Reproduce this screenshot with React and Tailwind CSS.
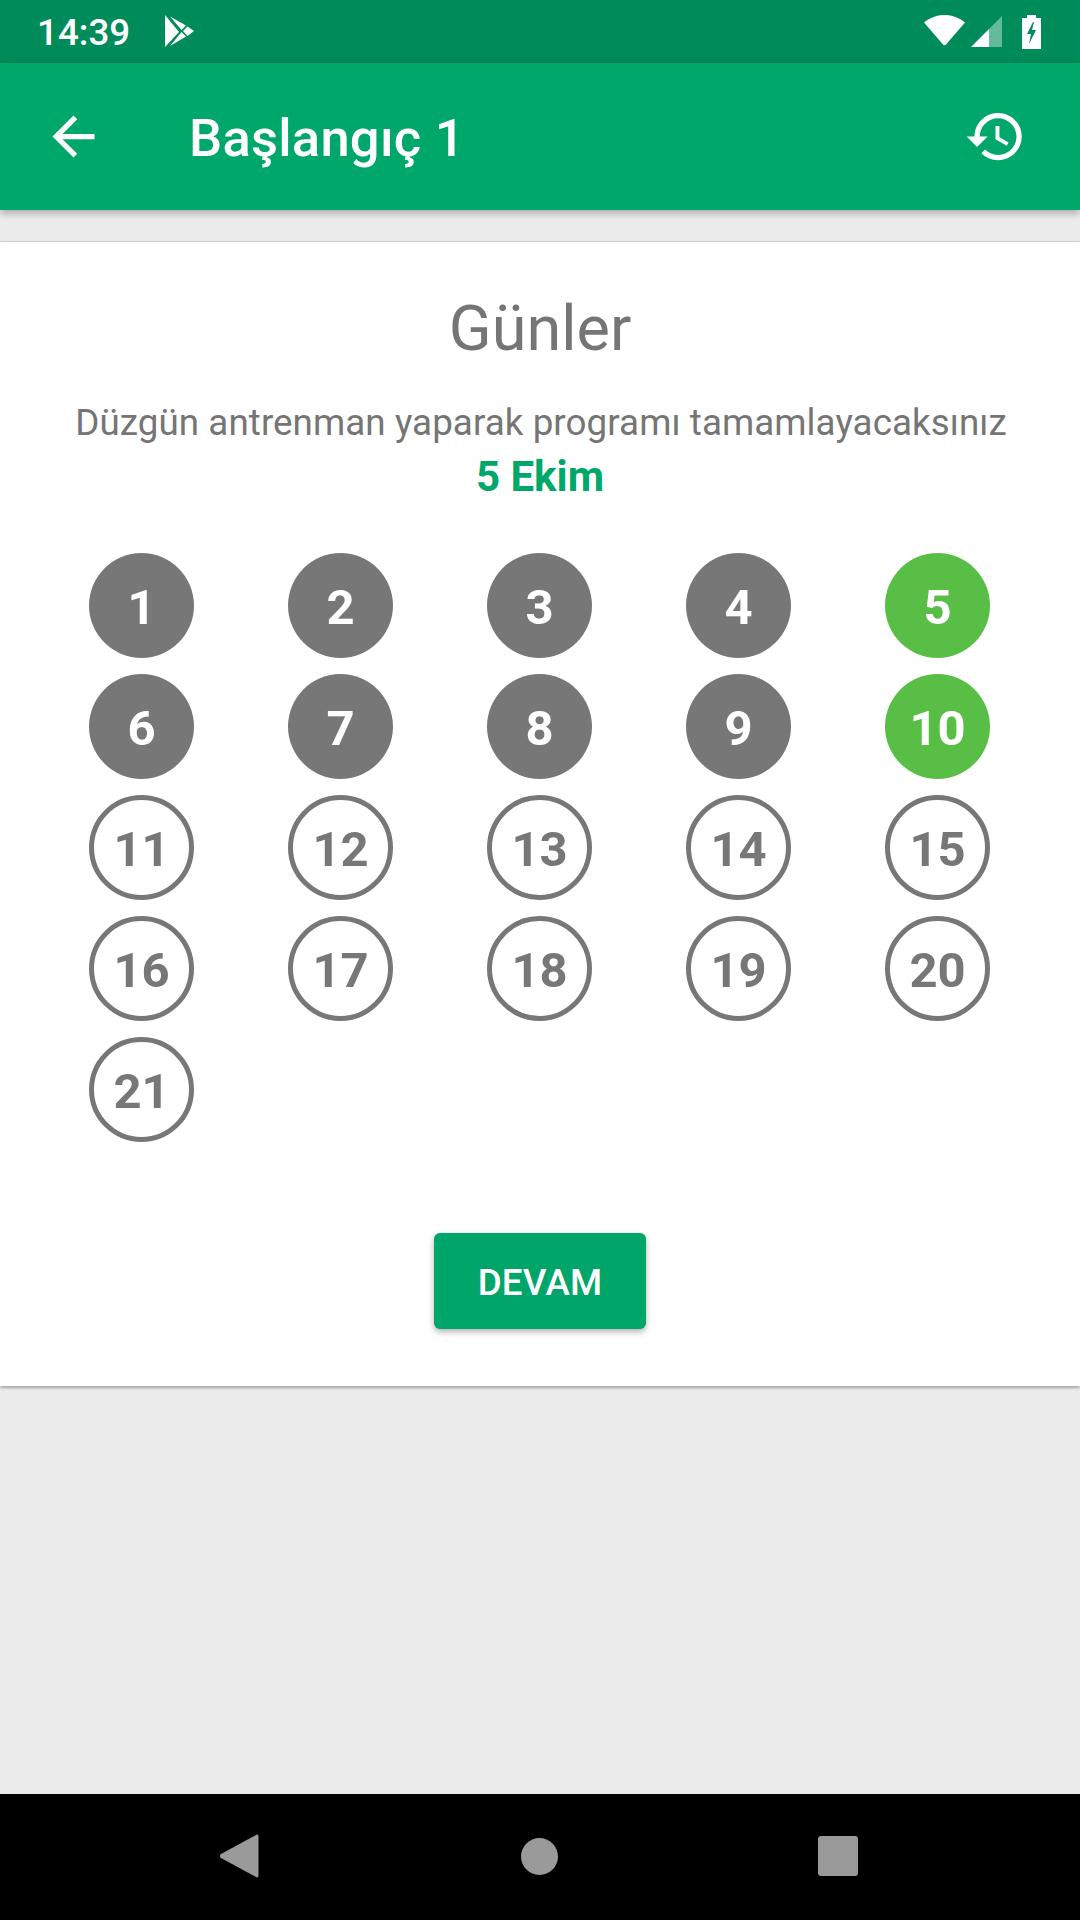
const days = Array.from({ length: 21 }, (_, i) => i + 1);
const grayDays = [1, 2, 3, 4, 6, 7, 8, 9];
const greenDays = [5, 10];

const DayCircle = ({ day }) => {
  let style = "border-[5px] border-[#777777] text-[#777777] bg-white";
  if (grayDays.includes(day)) style = "bg-[#777777] text-white";
  if (greenDays.includes(day)) style = "bg-[#59be45] text-white";
  return (
    <div className={`w-[105px] h-[105px] pt-[3px] rounded-full flex items-center justify-center text-[49px] font-bold leading-none ${style}`}>
      {day}
    </div>
  );
};

const App = () => {
  return (
    <div className="w-[1080px] h-[1920px] flex flex-col bg-[#ececec] font-['Roboto',sans-serif] overflow-hidden">
      {/* Status bar */}
      <div className="h-[63px] shrink-0 bg-[#008c5a] flex items-center justify-between pl-[37px] pr-[39px] text-white">
        <div className="flex items-center gap-[34px]">
          <span className="pt-[4px] text-[36.75px] font-medium leading-none">14:39</span>
          <svg width="30" height="33" viewBox="0 0 30 33" fill="white">
            <path d="M1 0 L1 32 L15 17 Z" />
            <path d="M6 1.5 L22 10.5 L17.5 15 Z" />
            <path d="M23.5 11.5 L30 16 L23.5 21 L19 16 Z" />
            <path d="M6 31 L22 21.5 L17.5 17 Z" />
          </svg>
        </div>
        <div className="flex items-center">
          <svg className="-mt-[2px]" width="41" height="31" viewBox="0 0 41 31" fill="white">
            <path d="M20.5 0 C28 0 35 2.6 41 7.6 L22 29.5 Q20.5 31 19 29.5 L0 7.6 C6 2.6 13 0 20.5 0 Z" />
          </svg>
          <svg className="ml-[6px]" width="31" height="31" viewBox="0 0 31 31">
            <path d="M31 0 V31 H18 V13 Z" fill="white" fillOpacity="0.4" />
            <path d="M18 13 V31 H0 Z" fill="white" />
          </svg>
          <svg className="ml-[20px]" width="19" height="34" viewBox="0 0 19 34" fill="white">
            <path fillRule="evenodd" d="M5 0 H14 V3 H19 V34 H0 V3 H5 Z M11 7 L5 19 H9 L7 29 L14 15 H10 L12 7 Z" />
          </svg>
        </div>
      </div>

      {/* App bar */}
      <div className="relative z-10 h-[147px] shrink-0 bg-[#00a76a] flex items-center pl-[42px] pr-[53px] text-white shadow-[0_3px_8px_rgba(0,0,0,0.3)]">
        <svg width="63" height="63" viewBox="0 0 24 24" fill="white">
          <path d="M20 11H7.83l5.59-5.59L12 4l-8 8 8 8 1.41-1.41L7.83 13H20v-2z" />
        </svg>
        <h1 className="ml-[84px] pt-[4px] text-[52.5px] font-medium leading-none tracking-[0.25px]">Başlangıç 1</h1>
        <svg width="63" height="63" viewBox="0 0 24 24" fill="white" className="ml-auto">
          <path d="M13 3c-4.97 0-9 4.03-9 9H1l3.89 3.89.07.14L9 12H6c0-3.87 3.13-7 7-7s7 3.13 7 7-3.13 7-7 7c-1.93 0-3.68-.79-4.94-2.06l-1.42 1.42C8.27 19.99 10.51 21 13 21c4.97 0 9-4.03 9-9s-4.03-9-9-9zm-1 5v5l4.28 2.54.72-1.21-3.5-2.08V8H12z" />
        </svg>
      </div>

      {/* Card */}
      <div className="mt-[32px] h-[1144px] shrink-0 bg-white shadow-[0_2px_3px_rgba(0,0,0,0.3),0_-1px_1px_rgba(0,0,0,0.1)] pt-[50px] flex flex-col items-center">
        <h2 className="text-[63px] leading-[74px] text-[#757575]">Günler</h2>
        <p className="mt-[30px] pl-[2px] text-[36.75px] leading-[54px] text-[#757575] tracking-[0.07px]">
          Düzgün antrenman yaparak programı tamamlayacaksınız
        </p>
        <p className="text-[42px] leading-[54px] font-bold text-[#00a76a]">5 Ekim</p>

        <div className="mt-[49px] w-full pl-[89px] pr-[90px] grid grid-cols-[repeat(5,105px)] gap-y-[16px] justify-between">
          {days.map((d) => (
            <DayCircle key={d} day={d} />
          ))}
        </div>

        <button className="mt-[91px] w-[212px] h-[96px] pt-[3px] rounded-[6px] bg-[#00a56a] text-white text-[36.75px] font-medium tracking-[0.2px] shadow-[0_3px_6px_rgba(0,0,0,0.3)]">
          DEVAM
        </button>
      </div>

      <div className="flex-1" />

      {/* Nav bar */}
      <div className="h-[126px] shrink-0 bg-black pb-[2px] flex items-center">
        <svg className="ml-[219px]" width="40" height="44" viewBox="0 0 40 44" fill="#9a9a9a">
          <path d="M37 1 C38.5 0 39.5 1 39.5 2.5 V41.5 C39.5 43 38.5 44 37 43 L2 24 C0.5 23 0.5 21 2 20 Z" />
        </svg>
        <div className="ml-[262px] w-[37px] h-[37px] rounded-full bg-[#9a9a9a]" />
        <div className="ml-[260px] w-[40px] h-[40px] rounded-[3px] bg-[#9a9a9a]" />
      </div>
    </div>
  );
};

export default App;
